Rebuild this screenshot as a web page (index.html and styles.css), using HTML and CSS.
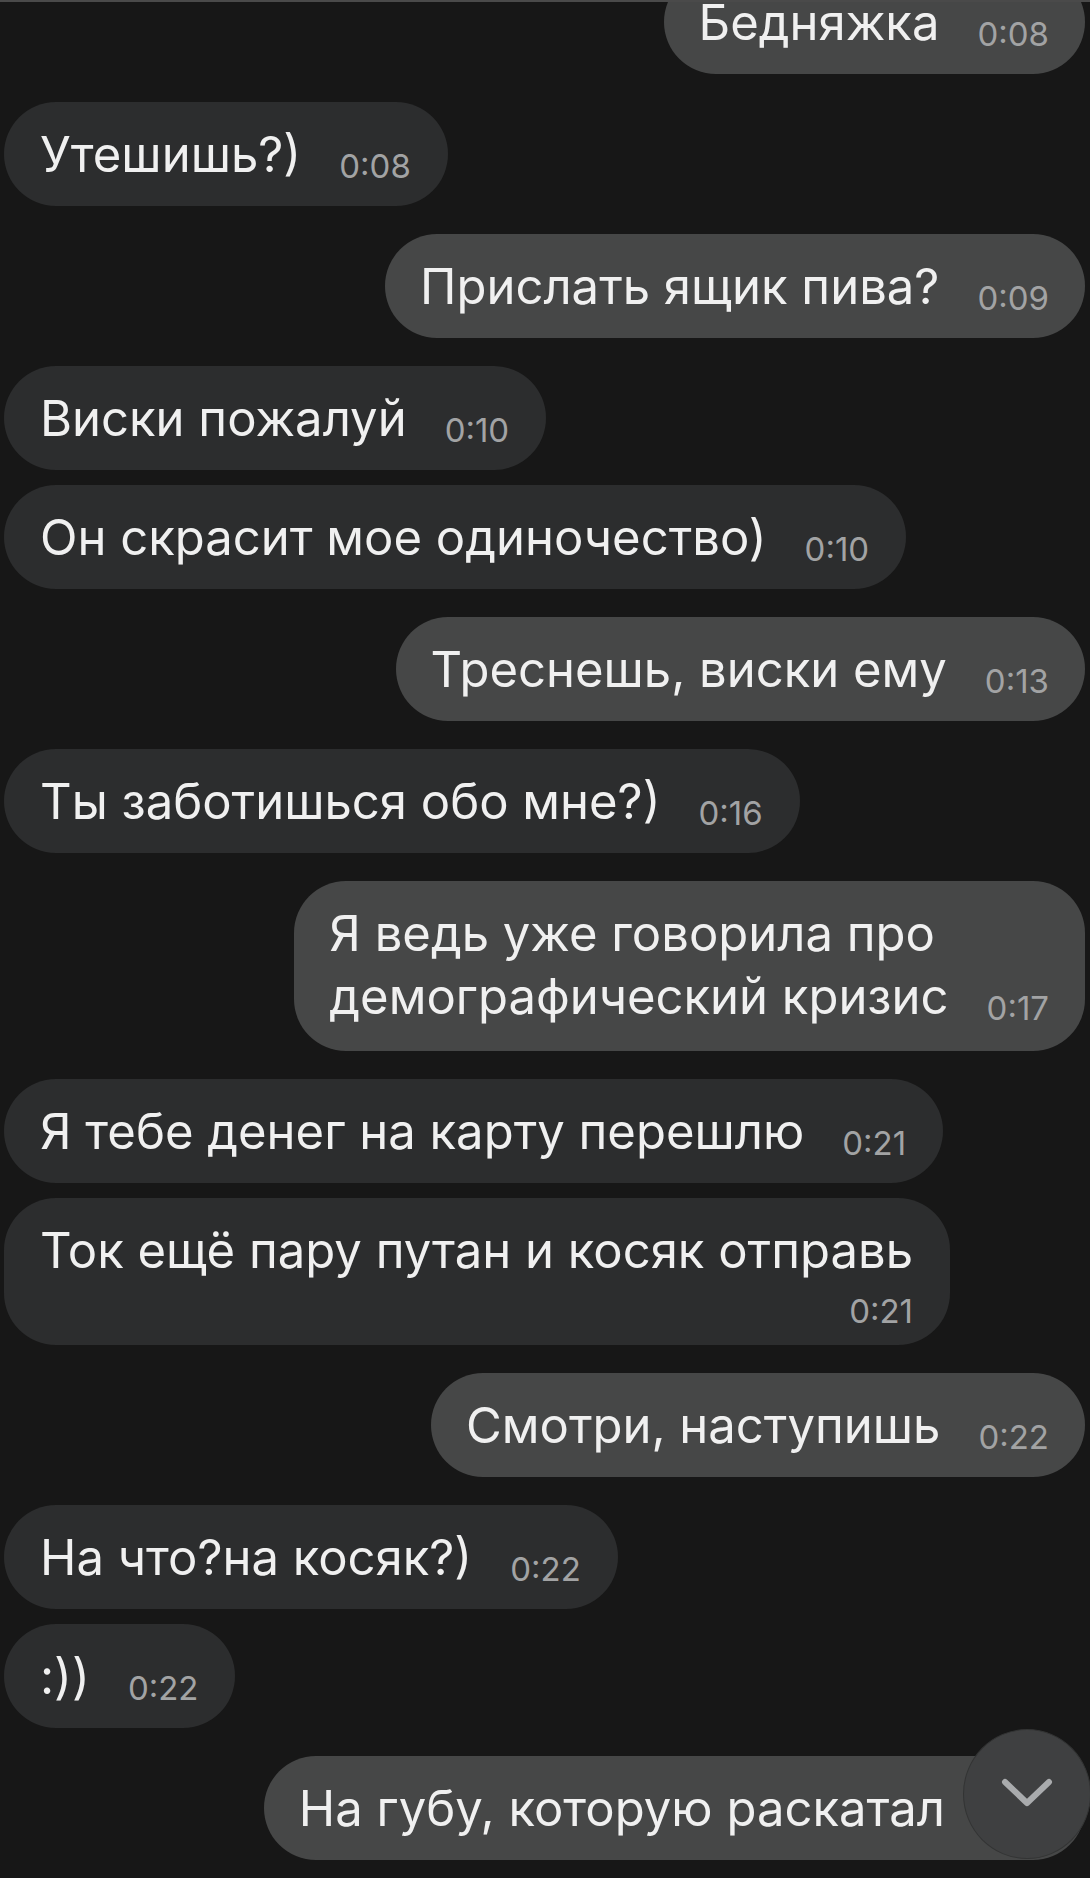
FILE: index.html
```html
<!DOCTYPE html>
<html lang="ru">
<head>
    <meta charset="UTF-8">
    <meta name="viewport" content="width=device-width, initial-scale=1.0">
    <title>Чат</title>
    <link rel="stylesheet" href="styles.css">
</head>
<body>
    <div class="chat">
        <div class="messages">
            <div class="msg out"><div class="bubble">Бедняжка<span class="time">0:08</span></div></div>
            <div class="msg in"><div class="bubble">Утешишь?)<span class="time">0:08</span></div></div>
            <div class="msg out"><div class="bubble">Прислать ящик пива?<span class="time">0:09</span></div></div>
            <div class="msg in"><div class="bubble">Виски пожалуй<span class="time">0:10</span></div></div>
            <div class="msg in"><div class="bubble">Он скрасит мое одиночество)<span class="time">0:10</span></div></div>
            <div class="msg out"><div class="bubble">Треснешь, виски ему<span class="time">0:13</span></div></div>
            <div class="msg in"><div class="bubble">Ты заботишься обо мне?)<span class="time">0:16</span></div></div>
            <div class="msg out"><div class="bubble two-lines">Я ведь уже говорила про<br>демографический кризис<span class="time">0:17</span></div></div>
            <div class="msg in"><div class="bubble">Я тебе денег на карту перешлю<span class="time">0:21</span></div></div>
            <div class="msg in"><div class="bubble wrapped">Ток ещё пару путан и косяк отправь<div class="time-row"><span class="time">0:21</span></div></div></div>
            <div class="msg out"><div class="bubble">Смотри, наступишь<span class="time">0:22</span></div></div>
            <div class="msg in"><div class="bubble">На что?на косяк?)<span class="time">0:22</span></div></div>
            <div class="msg in"><div class="bubble">:))<span class="time">0:22</span></div></div>
            <div class="msg out"><div class="bubble last">На губу, которую раскатал</div></div>
        </div>

        <button class="scroll-down" type="button">
            <svg width="60" height="40" viewBox="0 0 60 40">
                <polyline points="8,10 30,31 52,10" fill="none" stroke="#a9abad" stroke-width="6" stroke-linecap="round" stroke-linejoin="round"/>
            </svg>
        </button>
    </div>
</body>
</html>
```

FILE: styles.css
```css
body {
    margin: 0;
    padding: 0;
    background-color: #171717;
    font-family: 'Inter', 'Noto Sans', sans-serif;
    overflow: hidden;
}
.chat {
    position: relative;
    height: 1876px;
    border-top: 2px solid #4a4a4a;
    overflow: hidden;
}
.messages {
    display: flex;
    flex-direction: column;
    margin-top: -32px;
    padding: 0 5px 0 4px;
}
.msg {
    display: flex;
    margin-top: 28px;
}
.msg:first-child {
    margin-top: 0;
}
.msg.in + .msg.in,
.msg.out + .msg.out {
    margin-top: 15px;
}
.msg.in {
    justify-content: flex-start;
}
.msg.out {
    justify-content: flex-end;
}
.bubble {
    padding: 21px 37px 20px 36px;
    border-radius: 52px;
    font-size: 49px;
    line-height: 63px;
    color: #f0f0f0;
    white-space: nowrap;
    box-sizing: border-box;
}
.msg.in .bubble {
    background-color: #2c2d2e;
}
.msg.out .bubble {
    background-color: #464747;
    padding-left: 35px;
    padding-right: 36px;
}
.msg.out .bubble.last {
    padding-right: 140px;
}
.bubble.two-lines {
    padding-bottom: 23px;
}
.time {
    display: inline-block;
    margin-left: 38px;
    font-size: 33px;
    line-height: 1;
    color: #a2a3a4;
    vertical-align: -6px;
}
.bubble.wrapped {
    padding-bottom: 15px;
}
.time-row {
    text-align: right;
    line-height: 48px;
}
.time-row .time {
    margin-left: 0;
    vertical-align: baseline;
}
.scroll-down {
    position: absolute;
    right: -1px;
    bottom: 19px;
    width: 128px;
    height: 130px;
    border-radius: 50%;
    border: 1px solid #333434;
    background-color: #3f4041;
    display: flex;
    align-items: center;
    justify-content: center;
    padding: 0;
}
.scroll-down svg {
    margin-top: -4px;
}
```
